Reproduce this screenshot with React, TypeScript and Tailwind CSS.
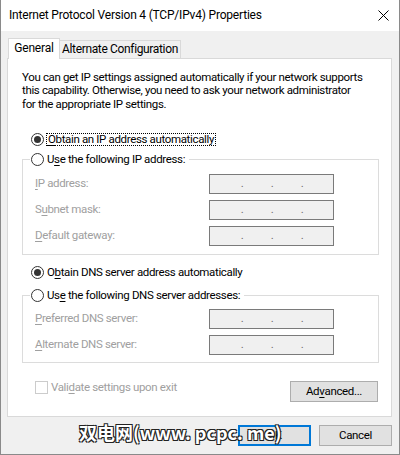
import React from "react";

// Windows 10 style "Internet Protocol Version 4 (TCP/IPv4) Properties" dialog

const Radio = ({ checked }: { checked?: boolean }) => (
  <span className="flex h-[13px] w-[13px] shrink-0 items-center justify-center rounded-full border border-[#333333] bg-white">
    {checked && <span className="h-[7px] w-[7px] rounded-full bg-[#333333]" />}
  </span>
);

const Key = ({ children }: { children: React.ReactNode }) => <span className="underline underline-offset-2">{children}</span>;

const IpField = () => (
  <div className="flex h-[20px] w-[125px] items-center gap-[24px] border border-[#7a7a7a] bg-[#f0f0f0] pl-[29px] text-[#6d6d6d]">
    <span className="w-[6px] text-center">.</span>
    <span className="w-[6px] text-center">.</span>
    <span className="w-[6px] text-center">.</span>
  </div>
);

const FieldRow = ({ label }: { label: React.ReactNode }) => (
  <div className="flex h-[20px] items-center">
    <span className="w-[186px] pl-[12px] text-[#a0a0a0]">{label}</span>
    <IpField />
  </div>
);

const Group = ({ legend, children, top }: { legend: React.ReactNode; children: React.ReactNode; top: string }) => (
  <fieldset className="w-[357px] border border-[#dcdcdc]">
    <legend className="ml-[7px] flex h-[16px] items-center gap-[3px] pl-[1px] pr-[4px]">
      <Radio />
      <span>{legend}</span>
    </legend>
    <div className={`flex flex-col gap-[6px] ${top}`}>{children}</div>
  </fieldset>
);

export default function App() {
  return (
    <div className="relative flex h-[455px] w-[400px] flex-col overflow-hidden whitespace-nowrap border-x border-b border-[#8a8a8a] bg-[#f0f0f0] font-['Roboto',sans-serif] text-[11.5px] leading-[13px] tracking-[-0.35px] text-black">
      {/* title bar */}
      <div className="flex h-[31px] shrink-0 items-center justify-between bg-white pl-[8px] pr-[9px] text-[12px] tracking-[-0.2px]">
        <span>Internet Protocol Version 4 (TCP/IPv4) Properties</span>
        <svg width="11" height="11" viewBox="0 0 11 11" className="mr-[1px]">
          <path d="M0.5 0.5 L10.5 10.5 M10.5 0.5 L0.5 10.5" stroke="#000" strokeWidth="1" fill="none" />
        </svg>
      </div>

      <div className="flex flex-col px-[6px] pt-[7px]">
        {/* tabs */}
        <div className="flex items-end">
          <div className="relative z-10 -mb-px ml-px flex h-[21px] w-[52px] items-center justify-center border-x border-t border-[#d9d9d9] bg-white pb-[1px] text-[12px] tracking-[-0.2px]">
            General
          </div>
          <div className="flex h-[18px] w-[121px] items-center justify-center border-r border-t border-[#d9d9d9] pb-[1px] text-[12px] tracking-[-0.35px]">
            Alternate Configuration
          </div>
        </div>

        {/* panel */}
        <div className="flex w-[385px] flex-col border border-[#d9d9d9] bg-white pl-[14px] pt-[12px] pb-[14px]">
          <p className="leading-[13.3px]">
            You can get IP settings assigned automatically if your network supports
            <br />
            this capability. Otherwise, you need to ask your network administrator
            <br />
            for the appropriate IP settings.
          </p>

          <div className="ml-[9px] mt-[22px] flex h-[14px] items-center gap-[2px]">
            <Radio checked />
            <span className="border border-dotted border-black px-px leading-[11px]">
              <Key>O</Key>btain an IP address automatically
            </span>
          </div>

          <div className="mt-[5px]">
            <Group
              top="pt-[6px] pb-[8px]"
              legend={
                <>
                  U<Key>s</Key>e the following IP address:
                </>
              }
            >
              <FieldRow label={<><Key>I</Key>P address:</>} />
              <FieldRow label={<>S<Key>u</Key>bnet mask:</>} />
              <FieldRow label={<><Key>D</Key>efault gateway:</>} />
            </Group>
          </div>

          <div className="ml-[9px] mt-[11px] flex h-[14px] items-center gap-[3px]">
            <Radio checked />
            <span>
              O<Key>b</Key>tain DNS server address automatically
            </span>
          </div>

          <div className="mt-[8px]">
            <Group
              top="pt-[5px] pb-[7px]"
              legend={
                <>
                  Us<Key>e</Key> the following DNS server addresses:
                </>
              }
            >
              <FieldRow label={<><Key>P</Key>referred DNS server:</>} />
              <FieldRow label={<><Key>A</Key>lternate DNS server:</>} />
            </Group>
          </div>

          <div className="mt-[18px] flex w-[356px] items-start justify-between">
            <div className="ml-[13px] flex h-[13px] items-center gap-[3px] text-[#a0a0a0]">
              <span className="h-[13px] w-[13px] border border-[#cccccc] bg-white" />
              <span>
                Vali<Key>d</Key>ate settings upon exit
              </span>
            </div>
            <button className="flex h-[21px] w-[88px] items-center justify-center border border-[#adadad] bg-[#e1e1e1]">
              Ad<Key>v</Key>anced...
            </button>
          </div>
        </div>
      </div>

      {/* dialog buttons */}
      <div className="mt-[8px] flex justify-end gap-[8px] pr-[7px]">
        <button className="flex h-[21px] w-[73px] items-center justify-center border-2 border-[#0078d7] bg-[#e1e1e1]">
          OK
        </button>
        <button className="flex h-[21px] w-[73px] items-center justify-center border border-[#adadad] bg-[#e1e1e1]">
          Cancel
        </button>
      </div>

      {/* watermark */}
      <div className="absolute left-[78px] top-[421px] font-['Noto_Sans_CJK_SC',sans-serif] text-[18px] leading-[22px] font-bold tracking-normal text-white [text-shadow:1px_1px_0_#222,-1px_-1px_0_#222,1px_-1px_0_#222,-1px_1px_0_#222]">
        双电网(www. pcpc. me)
      </div>
    </div>
  );
}
